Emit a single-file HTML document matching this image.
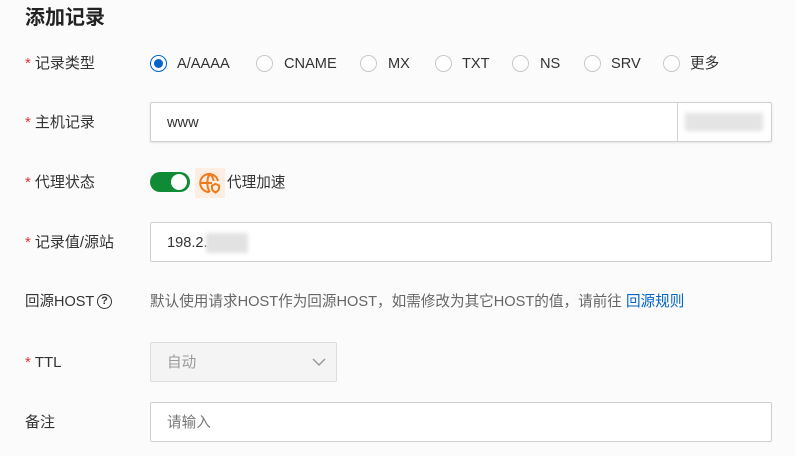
<!DOCTYPE html>
<html><head><meta charset="utf-8"><style>
body{margin:0;width:795px;height:456px;background:#fbfbfb;font-family:"Liberation Sans","Noto Sans CJK SC",sans-serif;color:#333;font-size:14.6px;position:relative;overflow:hidden}
.a{position:absolute}
.lab{position:absolute;left:25px;font-size:15px;color:#333;line-height:20px;white-space:nowrap}
.lab b{color:#d9363e;font-weight:normal;margin-right:4px}
.r{position:absolute;width:15px;height:15px;border:1px solid #c8c8c8;border-radius:50%;background:#fff;top:55px}
.rt{position:absolute;top:54px;line-height:20px;color:#333}
.inp{position:absolute;left:150px;width:620px;height:38px;border:1px solid #cfcfcf;border-radius:2px;background:#fff}
</style></head><body>
<div class="a" style="left:25px;top:5px;font-size:20px;font-weight:bold;color:#222;line-height:26px">添加记录</div>

<div class="lab" style="top:54px"><b>*</b>记录类型</div>
<div class="r" style="left:150px;border-color:#0064c8"><div style="position:absolute;left:3px;top:3px;width:9px;height:9px;border-radius:50%;background:#0064c8"></div></div>
<div class="rt" style="left:177px">A/AAAA</div>
<div class="r" style="left:256px"></div><div class="rt" style="left:284px">CNAME</div>
<div class="r" style="left:360px"></div><div class="rt" style="left:388px">MX</div>
<div class="r" style="left:435px"></div><div class="rt" style="left:462px">TXT</div>
<div class="r" style="left:512px"></div><div class="rt" style="left:540px">NS</div>
<div class="r" style="left:584px"></div><div class="rt" style="left:611px">SRV</div>
<div class="r" style="left:663px"></div><div class="rt" style="left:690px">更多</div>

<div class="lab" style="top:113px"><b>*</b>主机记录</div>
<div class="inp" style="top:102px;box-shadow:0 1px 2px rgba(0,0,0,.1)"><div class="a" style="left:16px;top:10px;line-height:20px">www</div>
<div class="a" style="left:526px;top:0;width:1px;height:38px;background:#d4d4d4"></div>
<div class="a" style="left:534px;top:10px;width:78px;height:18px;background:#e4e4e4;filter:blur(2px)"></div></div>

<div class="lab" style="top:173px"><b>*</b>代理状态</div>
<div class="a" style="left:150px;top:172px;width:40px;height:20px;border-radius:10px;background:#0f8a35"><div class="a" style="left:21px;top:2px;width:16px;height:16px;border-radius:50%;background:#fff"></div></div>
<div class="a" style="left:195px;top:168px;width:30px;height:30px;background:#fdeee4">
<svg width="30" height="30" viewBox="0 0 30 30" fill="none" stroke="#f07a1a" stroke-width="2"><path d="M23 13A9 9 0 1 0 14 24"/><path d="M6 15h11M15 6c-3.5 3.5-3.5 14 0 18M15 6c2.5 2.5 3.5 5 3.5 7"/><path d="M17 17.5l3.5-1.5L24 17.5v3c0 2-2 3-3.5 4-1.5-1-3.5-2-3.5-4z"/></svg></div>
<div class="a" style="left:227px;top:173px;line-height:20px">代理加速</div>

<div class="lab" style="top:233px"><b>*</b>记录值/源站</div>
<div class="inp" style="top:222px"><div class="a" style="left:16px;top:10px;line-height:20px">198.2.</div><div class="a" style="left:55px;top:10px;width:42px;height:20px;background:#e2e2e2;filter:blur(2px)"></div></div>

<div class="lab" style="top:292px;font-size:14.5px">回源HOST</div>
<div class="a" style="left:97px;top:294px;width:13px;height:13px;border:1.5px solid #333;border-radius:50%;font-size:11px;line-height:13px;text-align:center;font-weight:bold">?</div>
<div class="a" style="left:150px;top:292px;line-height:20px;color:#666;white-space:nowrap;font-size:14.6px">默认使用请求HOST作为回源HOST，如需修改为其它HOST的值，请前往 <span style="color:#0064c8">回源规则</span></div>

<div class="lab" style="top:353px"><b>*</b>TTL</div>
<div class="a" style="left:150px;top:342px;width:185px;height:38px;border:1px solid #ddd;border-radius:2px;background:#f4f4f4"><div class="a" style="left:16px;top:10px;line-height:20px;color:#999">自动</div>
<svg class="a" style="left:160px;top:13px" width="16" height="12" viewBox="0 0 16 12"><path d="M2 3l6 6 6-6" fill="none" stroke="#999" stroke-width="1.5"/></svg></div>

<div class="lab" style="top:413px">备注</div>
<div class="inp" style="top:402px"><div class="a" style="left:16px;top:10px;line-height:20px;color:#777">请输入</div></div>
</body></html>
